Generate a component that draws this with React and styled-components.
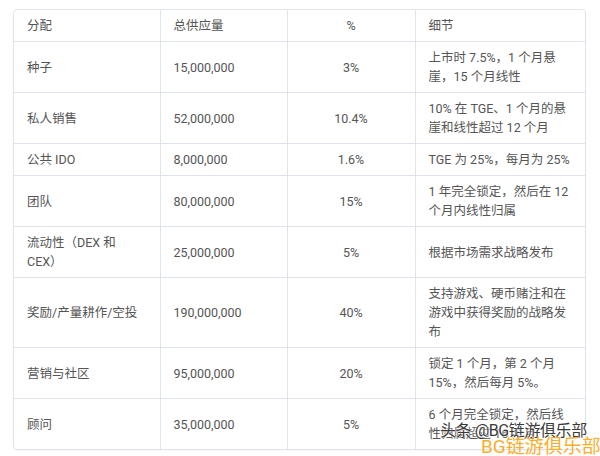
import React from 'react'
import styled, { createGlobalStyle } from 'styled-components'

const GlobalStyle = createGlobalStyle`
  html, body {
    margin: 0;
    padding: 0;
    background: #fff;
  }
  body {
    font-family: Roboto, "Noto Sans CJK SC", sans-serif;
  }
`

const rows = [
  ['种子', '15,000,000', '3%', '上市时 7.5%，1 个月悬崖，15 个月线性'],
  ['私人销售', '52,000,000', '10.4%', '10% 在 TGE、1 个月的悬崖和线性超过 12 个月'],
  ['公共 IDO', '8,000,000', '1.6%', 'TGE 为 25%，每月为 25%'],
  ['团队', '80,000,000', '15%', '1 年完全锁定，然后在 12 个月内线性归属'],
  ['流动性（DEX 和 CEX）', '25,000,000', '5%', '根据市场需求战略发布'],
  ['奖励/产量耕作/空投', '190,000,000', '40%', '支持游戏、硬币赌注和在游戏中获得奖励的战略发布'],
  ['营销与社区', '95,000,000', '20%', '锁定 1 个月，第 2 个月 15%，然后每月 5%。'],
  ['顾问', '35,000,000', '5%', '6 个月完全锁定，然后线性归属超过 16 个月'],
]

const App = () => {
  return (
    <Page>
      <GlobalStyle />
      <Card>
        <Table>
          <colgroup>
            <col style={{ width: 146 }} />
            <col style={{ width: 127 }} />
            <col style={{ width: 128 }} />
            <col style={{ width: 170 }} />
          </colgroup>
          <thead>
            <Row>
              <Cell as="th">分配</Cell>
              <Cell as="th">总供应量</Cell>
              <Cell as="th" $center>%</Cell>
              <Cell as="th">细节</Cell>
            </Row>
          </thead>
          <tbody>
            {rows.map((r) => (
              <Row key={r[0]}>
                <Cell>{r[0]}</Cell>
                <Cell>{r[1]}</Cell>
                <Cell $center>{r[2]}</Cell>
                <Cell>{r[3]}</Cell>
              </Row>
            ))}
          </tbody>
        </Table>
      </Card>
      <Credit>头条 @BG链游俱乐部</Credit>
      <Brand>BG链游俱乐部</Brand>
    </Page>
  )
}

const Page = styled.div`
  position: relative;
  width: 600px;
  height: 456px;
  overflow: hidden;
  padding: 9px 14px 0 13px;
  box-sizing: border-box;
`

const Card = styled.div`
  border: 1px solid #dfe4ec;
  border-radius: 4px;
  overflow: hidden;
  box-shadow: 0 1px 2px rgba(0, 0, 0, 0.04);
`

const Table = styled.table`
  width: 100%;
  table-layout: fixed;
  border-collapse: collapse;
  border-spacing: 0;
`

const Row = styled.tr`
  border-bottom: 1px solid #dfe4ec;
  tbody &:last-child {
    border-bottom: none;
  }
`

const Cell = styled.td`
  padding: 6px 13px;
  font-size: 12.5px;
  line-height: 19px;
  font-weight: 400;
  color: #555;
  text-align: ${(p) => (p.$center ? 'center' : 'left')};
  vertical-align: middle;
  border-right: 1px solid #dfe4ec;
  word-break: break-word;
  &:last-child {
    border-right: none;
  }
`

const Credit = styled.span`
  position: absolute;
  left: 440px;
  top: 421px;
  white-space: nowrap;
  font-size: 16px;
  line-height: 20px;
  letter-spacing: -0.4px;
  color: #3a3a3a;
  text-shadow: 0 0 2px #fff, 0 0 2px #fff;
`

const Brand = styled.span`
  position: absolute;
  left: 481px;
  top: 435px;
  white-space: nowrap;
  font-size: 19px;
  line-height: 24px;
  color: #f7b02e;
`

export default App
